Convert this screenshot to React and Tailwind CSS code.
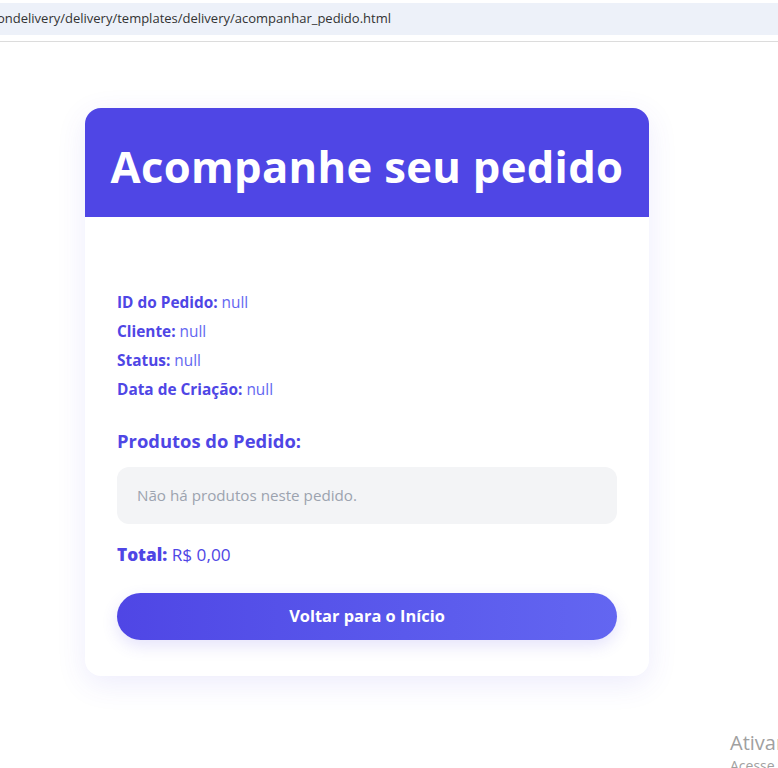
export default function App() {
  const font = { fontFamily: '"Open Sans", "Noto Sans", sans-serif' };
  return (
    <div className="relative w-[778px] h-[768px] overflow-hidden bg-white" style={font}>
      <div className="h-[42px] border-b border-[#dcdcdc] bg-white pt-[3px]">
        <div className="h-[32px] bg-[#edf1f9] flex items-center text-[13px] text-[#333] -ml-[3px]">
          ondelivery/delivery/templates/delivery/acompanhar_pedido.html
        </div>
      </div>
      <div className="pl-[85px] pt-[66px]">
        <div className="w-[564px] rounded-[16px] bg-white overflow-hidden shadow-[0_8px_30px_rgba(79,70,229,0.10)]">
          <div className="h-[109px] bg-[#4f46e5] flex items-center justify-center">
            <h1 className="text-white font-bold text-[43.6px] tracking-[0.3px] leading-none mt-[8px]">Acompanhe seu pedido</h1>
          </div>
          <div className="px-[32px] pt-[74px] pb-[36px]">
            <div className="flex flex-col gap-[6px] text-[15.4px] leading-[23px] text-[#4f46e5]">
              <p><span className="font-bold">ID do Pedido:</span> <span className="text-[#6366f1]">null</span></p>
              <p><span className="font-bold">Cliente:</span> <span className="text-[#6366f1]">null</span></p>
              <p><span className="font-bold">Status:</span> <span className="text-[#6366f1]">null</span></p>
              <p><span className="font-bold">Data de Criação:</span> <span className="text-[#6366f1]">null</span></p>
            </div>
            <h2 className="mt-[27px] text-[18.4px] font-bold text-[#4f46e5] leading-[26px]">Produtos do Pedido:</h2>
            <div className="mt-[13px] h-[57px] rounded-[12px] bg-[#f3f4f6] flex items-center px-[20px] text-[15.2px] text-[#9ca3af]">
              Não há produtos neste pedido.
            </div>
            <p className="mt-[19px] text-[17.2px] leading-[24px] text-[#4f46e5]"><span className="font-extrabold">Total:</span> R$ 0,00</p>
            <button className="mt-[26px] w-full h-[47px] rounded-full bg-gradient-to-r from-[#4f46e5] to-[#6366f1] text-white font-bold text-[16.4px] shadow-[0_6px_16px_rgba(79,70,229,0.15)]">
              Voltar para o Início
            </button>
          </div>
        </div>
      </div>
      <div className="absolute left-[730px] top-[733px] text-[#a0a0a0] leading-none whitespace-nowrap">
        <div className="text-[20px]">Ativar</div>
        <div className="text-[14px] mt-[6px]">Acesse</div>
      </div>
    </div>
  );
}
